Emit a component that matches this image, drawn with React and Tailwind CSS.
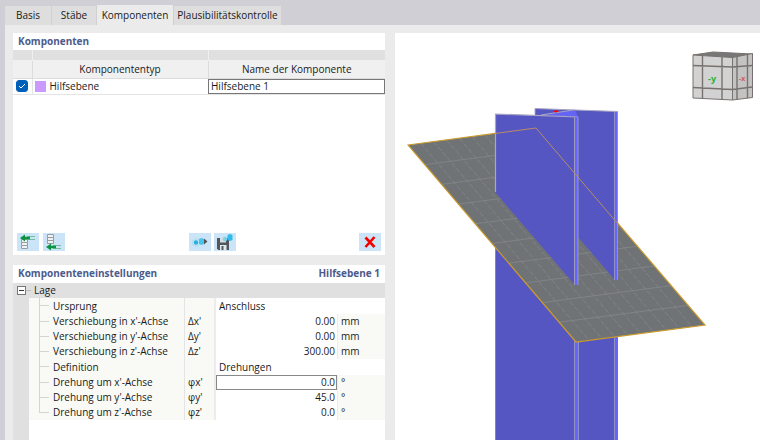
import { useState } from "react";

const tabs = [
  { name: "Basis", width: "w-[47px]" },
  { name: "Stäbe", width: "w-[45px]" },
  { name: "Komponenten", width: "w-[77px]" },
  { name: "Plausibilitätskontrolle", width: "w-[108px]" },
];

const rows = [
  { name: "Ursprung", choice: "Anschluss" },
  { name: "Verschiebung in x'-Achse", symbol: "Δ", axis: "x'", value: "0.00", unit: "mm" },
  { name: "Verschiebung in y'-Achse", symbol: "Δ", axis: "y'", value: "0.00", unit: "mm" },
  { name: "Verschiebung in z'-Achse", symbol: "Δ", axis: "z'", value: "300.00", unit: "mm" },
  { name: "Definition", choice: "Drehungen" },
  { name: "Drehung um x'-Achse", symbol: "φ", axis: "x'", value: "0.0", unit: "°", active: true },
  { name: "Drehung um y'-Achse", symbol: "φ", axis: "y'", value: "45.0", unit: "°" },
  { name: "Drehung um z'-Achse", symbol: "φ", axis: "z'", value: "0.0", unit: "°" },
];

// corners of the auxiliary plane
const plane = { a: [408, 145], b: [536, 128], c: [705, 325], d: [576, 342] };

function mix(p, q, t) {
  return [p[0] + (q[0] - p[0]) * t, p[1] + (q[1] - p[1]) * t];
}

function ToolButton({ label, children }) {
  return (
    <button aria-label={label} className="flex h-[18px] w-[22px] items-center justify-center bg-[#cce4f7]">
      {children}
    </button>
  );
}

function InsertIcon({ below }) {
  const boxes = below ? 1 : 6;
  const arrow = below ? 13 : 4;
  return (
    <svg viewBox="0 0 22 18" className="h-[18px] w-[22px]" fill="none">
      <path
        d={`M4.5 ${boxes}.5h6v3h-6zM4.5 ${boxes + 3}.5h6v3h-6zM4.5 ${boxes + 6}.5h6v3h-6z`}
        stroke="#9a9da0"
        fill="#eef2f4"
      />
      <path d={`M10 ${arrow - 1}.5h8M10 ${arrow + 2}.5h8`} stroke="#6fbf9b" />
      <path d={`M3 ${arrow + 1}l5-3.5v2.3h5v2.4H8v2.3z`} fill="#0b9444" />
    </svg>
  );
}

function ShareIcon() {
  return (
    <svg viewBox="0 0 22 18" className="h-[18px] w-[22px]">
      <circle cx="7" cy="9.5" r="2.2" fill="#25b4e0" />
      <circle cx="7" cy="9.5" r="3.6" fill="none" stroke="#8bd6ef" strokeDasharray="1.4 1.2" />
      <path d="M10 6l2.500-1 2.500 1v5l-2.500 1-2.500-1z" fill="#45c4ec" />
      <path d="M15 5.500l3.500 3-3.500 3z" fill="#555" />
    </svg>
  );
}

function SaveIcon() {
  return (
    <svg viewBox="0 0 22 18" className="h-[18px] w-[22px]">
      <path d="M3 5h10.500l1.500 1.500V17H4.500L3 15.500z" fill="#53575b" />
      <path d="M6 5h6v4.500H6z" fill="#cfdde6" />
      <path d="M6 12h6.500v5H6z" fill="#dfe9f0" />
      <path d="M7.500 13h2v4h-2z" fill="#53575b" />
      <circle cx="11" cy="6" r="2.200" fill="#7fd0ea" />
      <path d="M13.500 2l2.500-1 2.500 1v5l-2.500 1-2.500-1z" fill="#2fbce8" />
    </svg>
  );
}

function Components() {
  const [checked, setChecked] = useState(true);

  return (
    <section className="flex h-[222px] flex-col bg-white">
      <h2 className="h-[17px] px-[5px] leading-[17px] font-bold text-[#4c5b8c]">Komponenten</h2>
      <table className="w-full table-fixed border-collapse">
        <colgroup>
          <col className="w-[19px]" />
          <col />
          <col className="w-[177px]" />
        </colgroup>
        <thead>
          <tr className="h-[10px] bg-[#e0e0e0]">
            <td className="border-r border-b border-[#f0f0f0]" />
            <td className="border-r border-b border-[#f0f0f0]" />
            <td className="border-b border-[#f0f0f0]" />
          </tr>
          <tr className="h-[18px] bg-[#f0f0f0] leading-[16px]">
            <th className="border-r border-b border-[#dcdcdc]" />
            <th className="border-r border-b border-[#dcdcdc] p-0 font-normal">Komponententyp</th>
            <th className="border-b border-[#dcdcdc] p-0 font-normal">Name der Komponente</th>
          </tr>
        </thead>
        <tbody>
          <tr className="h-[15px] border-b border-[#e4e4e4]">
            <td className="border-r border-[#e4e4e4] p-0">
              <label className="relative mx-auto block size-3">
                <input
                  type="checkbox"
                  aria-label="Hilfsebene"
                  checked={checked}
                  onChange={(e) => setChecked(e.target.checked)}
                  className="block size-3 appearance-none rounded-[3px] border border-[#005fb8] checked:bg-[#005fb8]"
                />
                {checked && (
                  <svg viewBox="0 0 12 12" className="pointer-events-none absolute inset-0 size-3" fill="none">
                    <path d="M3 6l2 2 4-4" stroke="#fff" />
                  </svg>
                )}
              </label>
            </td>
            <td className="p-0">
              <div className="flex items-center gap-1 pl-[2px] leading-[15px]">
                <span className="size-[11px] bg-[#cc99ff]" />
                Hilfsebene
              </div>
            </td>
            <td className="p-0">
              <input
                aria-label="Name der Komponente"
                defaultValue="Hilfsebene 1"
                className="block h-[15px] w-full border border-[#777] px-[2px] outline-none"
              />
            </td>
          </tr>
        </tbody>
      </table>
      <div className="mt-auto flex justify-between px-1 pb-1">
        <div className="flex gap-1">
          <ToolButton label="Oberhalb einfügen"><InsertIcon /></ToolButton>
          <ToolButton label="Unterhalb einfügen"><InsertIcon below /></ToolButton>
        </div>
        <div className="flex gap-[3px]">
          <ToolButton label="Übertragen"><ShareIcon /></ToolButton>
          <ToolButton label="Speichern"><SaveIcon /></ToolButton>
        </div>
        <ToolButton label="Löschen">
          <svg viewBox="0 0 12 12" className="size-3" fill="none">
            <path d="M1.500 1.500l9 9.500M10.500 1l-9 10" stroke="#f40000" strokeWidth="2.600" />
          </svg>
        </ToolButton>
      </div>
    </section>
  );
}

function Settings() {
  const [open, setOpen] = useState(true);

  return (
    <section className="flex min-h-0 flex-1 flex-col bg-white">
      <div className="flex h-[18px] shrink-0 justify-between px-[5px] leading-[17px] font-bold text-[#4c5b8c]">
        <h2>Komponenteneinstellungen</h2>
        <span>Hilfsebene 1</span>
      </div>
      <div className="flex h-[15px] shrink-0 items-center bg-[#e0e0e0] pl-1">
        <button
          aria-label="Lage"
          aria-expanded={open}
          onClick={() => setOpen(!open)}
          className="flex size-[9px] items-center justify-center border border-[#777] bg-white"
        >
          <span className="h-px w-[5px] bg-[#333]" />
        </button>
        <span className="mr-[3px] w-[5px] border-t border-[#bbb]" />
        <span>Lage</span>
      </div>
      <div className="min-h-0 flex-1 bg-[#e0e0e0] pl-4">
        <div className="h-full bg-white">
          {open && (
            <table className="w-full table-fixed border-separate border-spacing-0">
              <colgroup>
                <col className="w-[156px]" />
                <col className="w-[31px]" />
                <col className="w-[122px]" />
                <col />
              </colgroup>
              <tbody>
                {rows.map((row, i) => (
                  <tr key={row.name} className={row.choice ? "h-4" : "h-[15px]"}>
                    <td className="border-r border-[#e4e4e4] bg-[#f9faf5] p-0">
                      <div className={"flex items-center leading-[15px] " + (row.choice ? "h-4" : "h-[15px]")}>
                        <span className="ml-[10px] flex h-full w-[10px] flex-col">
                          <span className="h-2 border-b border-l border-[#d4d4d4]" />
                          {i < rows.length - 1 && <span className="flex-1 border-l border-[#d4d4d4]" />}
                        </span>
                        <span className="pl-1 whitespace-nowrap">{row.name}</span>
                      </div>
                    </td>
                    <td className="border-r-2 border-[#ececec] bg-[#f9faf5] p-0">
                      <div className="flex pl-[3px] leading-[15px]">
                        <span>{row.symbol}</span>
                        <span>{row.axis}</span>
                      </div>
                    </td>
                    {row.choice ? (
                      <td colSpan={2} className="p-0">
                        <select aria-label={row.name} className="block h-[15px] w-full appearance-none pl-[3px] leading-[15px] outline-none">
                          <option>{row.choice}</option>
                        </select>
                      </td>
                    ) : (
                      <>
                        <td className="border-r border-[#ececec] p-0">
                          <input
                            aria-label={row.name}
                            defaultValue={row.value}
                            className={
                              "block h-[15px] w-full border pr-px text-right outline-none " +
                              (row.active ? "border-[#888]" : "border-transparent")
                            }
                          />
                        </td>
                        <td className="bg-[#f9faf5] p-0">
                          <div className="pl-[3px] leading-[15px]">{row.unit}</div>
                        </td>
                      </>
                    )}
                  </tr>
                ))}
              </tbody>
            </table>
          )}
        </div>
      </div>
    </section>
  );
}

function PlaneGrid() {
  const { a, b, c, d } = plane;
  const steps = [1, 2, 3, 4, 5, 6, 7, 8, 9];
  return (
    <g stroke="#85888a" strokeWidth="0.8">
      {steps.map((n) => {
        const [x1, y1] = mix(a, d, n / 10);
        const [x2, y2] = mix(b, c, n / 10);
        return <line key={"c" + n} x1={x1} y1={y1} x2={x2} y2={y2} />;
      })}
      {steps.map((n) => {
        const [x1, y1] = mix(a, b, n / 10);
        const [x2, y2] = mix(d, c, n / 10);
        return <line key={"l" + n} x1={x1} y1={y1} x2={x2} y2={y2} strokeDasharray="5 2" />;
      })}
    </g>
  );
}

function Cube() {
  return (
    <g stroke="#77726f" strokeLinejoin="round">
      <path d="M693 55l20-3 39.500 2-20 4z" fill="#777" />
      <path d="M693 55l39.500 2.500V100L693 98z" fill="#d2d2d2" />
      <path d="M732.500 57.500l20-4V97.500l-20 2.500z" fill="#c3c3c3" />
      <path
        d="M702.500 55.500v43M722 57v42.500M693 65.500l39.500 1.500 20-1.500M693 87.500l39.500 2 20-2.500M737 57v42.500M747.500 55v43"
        fill="none"
        strokeWidth="1.4"
      />
      <g stroke="none" fontFamily="Open Sans, sans-serif" fontWeight="bold">
        <text x="708" y="82" fontSize="9" fill="#27b43c">-y</text>
        <text x="739" y="81" fontSize="7" fill="#d06060">-x</text>
      </g>
    </g>
  );
}

function Viewer() {
  return (
    <main className="min-w-0 flex-1 bg-white">
      <svg viewBox="395 33 365 407" preserveAspectRatio="xMinYMin slice" className="block h-full w-full" role="img" aria-label="3D">
        {/* column below the plane */}
        <path d="M495 240L576 335H618V440H495z" fill="#5656c2" />
        <path d="M495.500 246V440" stroke="#8884ba" />
        <path d="M574 338h4.500V440h-4.500zM614 336h4V440h-4z" fill="#6464ff" />
        <path d="M574.500 338V440M578.500 338V440M614.500 336V440" stroke="#9290c5" />

        <path d="M408 145L536 128 705 325 576 342z" fill="#707375" />
        <PlaneGrid />
        <path d="M408 145L536 128 705 325 576 342z" fill="none" stroke="#c99a2c" strokeWidth="1.200" />

        {/* rear flange */}
        <path d="M535 108.500L618 111.500V280L614 279 535 187z" fill="#5656c2" />
        <path d="M541 115L575 110 578 117z" fill="#6565f5" />
        <path d="M535 114V108.500L617.500 111.500M541 115L573 110" fill="none" stroke="#aaa7c2" />
        <path d="M614 112h4v168h-4z" fill="#6464ff" />
        <path d="M614.500 112v168M617.500 112v168" stroke="#9290c5" />
        <path d="M553 111.500l3-1.500 3 1.500-3 1z" fill="#f00" />

        {/* front flange */}
        <path d="M495 114L578 117V285L574 284 495 192z" fill="#5656c2" />
        <path d="M495.500 192V114L578 117" fill="none" stroke="#aaa7c2" strokeWidth="1.200" />
        <path d="M574 117h4v168h-4z" fill="#6464ff" />
        <path d="M574.500 117v168M578 117v168" stroke="#9c9abf" />
        <path d="M495 133.500L536 128 618 224" fill="none" stroke="#b68b67" />
        <Cube />
      </svg>
    </main>
  );
}

export default function App() {
  const [tab, setTab] = useState("Komponenten");

  return (
    <div className="flex h-screen flex-col overflow-hidden bg-[#d0cfd5] pt-[5px] pl-[5px] font-['Open_Sans','Noto_Sans',sans-serif] text-[10px] text-[#1a1a1a]">
      <nav className="flex h-5 shrink-0 items-end">
        {tabs.map(({ name, width }) => (
          <button
            key={name}
            onClick={() => setTab(name)}
            className={
              "border-r border-[#d0d0d0] text-center leading-[19px] whitespace-nowrap " +
              width +
              (name === tab ? " h-5 bg-[#ebebeb]" : " h-[19px] bg-[#dedede]")
            }
          >
            {name}
          </button>
        ))}
      </nav>
      <div className="flex min-h-0 flex-1 gap-[10px] bg-[#ebebeb] pt-2 pl-2">
        <div className="flex w-[372px] shrink-0 flex-col gap-[10px]">
          <Components />
          <Settings />
        </div>
        <Viewer />
      </div>
    </div>
  );
}
